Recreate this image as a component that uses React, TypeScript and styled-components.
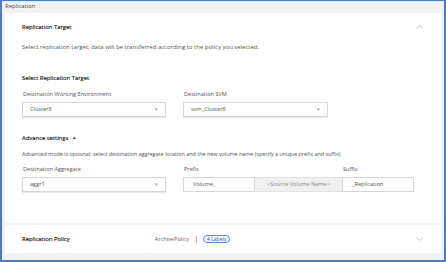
import React from "react";
import styled, { createGlobalStyle } from "styled-components";

const Global = createGlobalStyle`
    html, body {
        margin: 0;
        padding: 0;
        background: #ffffff;
    }
    * {
        box-sizing: border-box;
    }
`;

const Chevron = ({ up }: { up?: boolean }) => (
    <svg width="7" height="4" viewBox="0 0 7 4">
        <path
            d={up ? "M0.5 3.5 L3.5 0.7 L6.5 3.5" : "M0.5 0.5 L3.5 3.3 L6.5 0.5"}
            fill="none"
            stroke="#b4b4b4"
            strokeWidth="0.8"
        />
    </svg>
);

type FieldProps = { width: number; value: string };

const SelectField = ({ width, value }: FieldProps) => (
    <Select style={{ width }}>
        <span>{value}</span>
        <Caret>▾</Caret>
    </Select>
);

const App = () => {
    return (
        <>
            <Global />
            <Frame>
                <PageTitle>Replication</PageTitle>
                <Card>
                    <TitleRow>
                        <Title>Replication Target</Title>
                        <Chevron up />
                    </TitleRow>
                    <Desc top={12} size={6} spacing={0}>
                        Select replication target, data will be transferred according to the policy you selected.
                    </Desc>
                    <SubTitle top={23}>Select Replication Target</SubTitle>
                    <FieldRow top={8}>
                        <Field>
                            <Label>Destination Working Environment</Label>
                            <SelectField width={144} value="Cluster8" />
                        </Field>
                        <Field>
                            <Label>Destination SVM</Label>
                            <SelectField width={145} value="svm_Cluster8" />
                        </Field>
                    </FieldRow>
                    <SubTitle top={17}>
                        Advance settings <Triangle>▲</Triangle>
                    </SubTitle>
                    <Desc top={8} size={5.5} spacing={-0.05}>
                        Advanced mode is optional: select destination aggregate location and the new volume name (specify a unique prefix and suffix)
                    </Desc>
                    <FieldRow top={7}>
                        <Field>
                            <Label>Destination Aggregate</Label>
                            <SelectField width={144} value="aggr1" />
                        </Field>
                        <NameGroup>
                            <Field>
                                <Label>Prefix</Label>
                                <Input width={72}>Volume_</Input>
                            </Field>
                            <Field>
                                <Label>&nbsp;</Label>
                                <Fixed>&lt;Source Volume Name&gt;</Fixed>
                            </Field>
                            <Field>
                                <Label>Suffix</Label>
                                <Input width={72}>_Replication</Input>
                            </Field>
                        </NameGroup>
                    </FieldRow>
                </Card>
                <PolicyCard>
                    <Title>Replication Policy</Title>
                    <PolicyValue>ArchivePolicy</PolicyValue>
                    <Divider />
                    <Badge>4 Labels</Badge>
                    <Spacer />
                    <Chevron />
                </PolicyCard>
            </Frame>
        </>
    );
};

export default App;

const Frame = styled.div`
    width: 446px;
    height: 262px;
    border: 2px solid #4a7bd0;
    border-top-width: 1px;
    background: #f2f2f2;
    padding: 0 3px;
    font-family: "Open Sans", "Liberation Sans", sans-serif;
    color: #333;
    display: flex;
    flex-direction: column;
`;

const PageTitle = styled.div`
    height: 12px;
    line-height: 11px;
    font-size: 5.9px;
    color: #444;
`;

const Card = styled.div`
    height: 210px;
    background: #ffffff;
    padding: 10px 18px 0 17px;
    display: flex;
    flex-direction: column;
`;

const TitleRow = styled.div`
    display: flex;
    align-items: center;
    justify-content: space-between;
    height: 8px;
`;

const Title = styled.div`
    font-size: 5.9px;
    font-weight: 400;
    color: #222;
    line-height: 8px;
    -webkit-text-stroke: 0.15px #222;
`;

const SubTitle = styled(Title)<{ top: number }>`
    margin-top: ${(p) => p.top}px;
    display: flex;
    align-items: center;
    gap: 4px;
`;

const Triangle = styled.span`
    font-size: 4px;
    color: #222;
`;

const Desc = styled.div<{ top: number; size: number; spacing: number }>`
    margin-top: ${(p) => p.top}px;
    font-size: ${(p) => p.size}px;
    letter-spacing: ${(p) => p.spacing}px;
    line-height: 8px;
    color: #555;
    white-space: nowrap;
`;

const FieldRow = styled.div<{ top: number }>`
    margin-top: ${(p) => p.top}px;
    display: flex;
    gap: 17px;
`;

const Field = styled.div`
    display: flex;
    flex-direction: column;
`;

const Label = styled.div`
    font-size: 5.6px;
    line-height: 8px;
    color: #555;
    margin-bottom: 3.5px;
    padding-left: 1px;
`;

const Select = styled.div`
    height: 15.5px;
    border: 1px solid #d6d6d6;
    box-shadow: 0 1px 1px rgba(0, 0, 0, 0.08);
    background: #fff;
    display: flex;
    align-items: center;
    justify-content: space-between;
    padding: 0 7px;
    font-size: 5.6px;
    color: #555;
`;

const Caret = styled.span`
    font-size: 5px;
    color: #999;
`;

const NameGroup = styled.div`
    display: flex;
`;

const Input = styled.div<{ width: number }>`
    width: ${(p) => p.width}px;
    height: 15.5px;
    border: 1px solid #d6d6d6;
    background: #fff;
    display: flex;
    align-items: center;
    padding: 0 9px;
    font-size: 5.6px;
    color: #555;
`;

const Fixed = styled.div`
    width: 87px;
    height: 15.5px;
    background: #f0f0f0;
    border-top: 1px solid #e2e2e2;
    border-bottom: 1px solid #e2e2e2;
    display: flex;
    align-items: center;
    justify-content: center;
    font-size: 5.6px;
    color: #888;
`;

const PolicyCard = styled.div`
    margin-top: 2px;
    height: 28px;
    background: #fff;
    display: flex;
    align-items: center;
    padding: 0 18px 0 17px;
`;

const PolicyValue = styled.div`
    margin-left: 85px;
    font-size: 5.6px;
    color: #666;
`;

const Divider = styled.div`
    width: 1px;
    height: 7px;
    background: #b8b8b8;
    margin: 0 6px 0 7px;
`;

const Badge = styled.div`
    height: 8px;
    line-height: 7px;
    padding: 0 3px;
    border: 1px solid #5b8fde;
    border-radius: 5px;
    background: #eef4fd;
    color: #2f66c2;
    font-size: 5px;
`;

const Spacer = styled.div`
    flex: 1;
`;
